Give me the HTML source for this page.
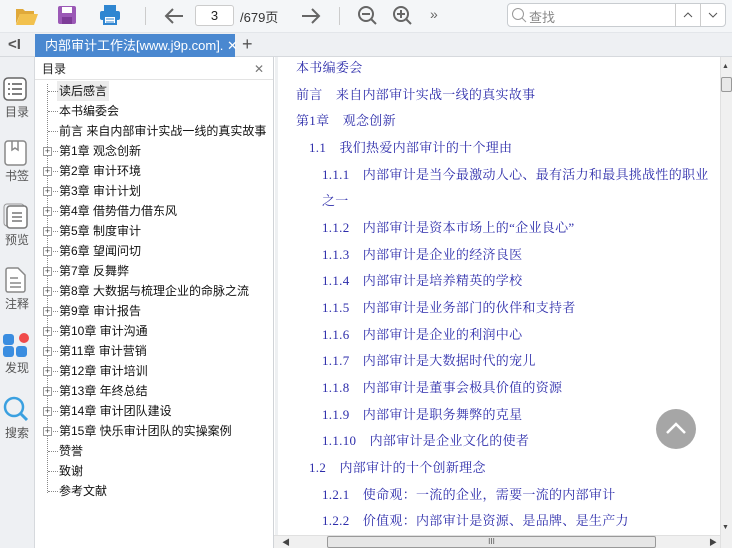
<!DOCTYPE html>
<html><head><meta charset="utf-8"><style>
*{margin:0;padding:0;box-sizing:border-box}
body{width:732px;height:548px;overflow:hidden;background:#fff;font-family:"Liberation Sans","Microsoft YaHei","Noto Sans CJK SC",sans-serif;position:relative}
.abs{position:absolute}
#tb{left:0;top:0;width:732px;height:33px;background:#f4f6f8;border-bottom:1px solid #e3e6ea}
#tabs{left:0;top:33px;width:732px;height:24px;background:#eef0f3;border-bottom:1px solid #d6d9dd}
#tab{left:35px;top:34px;width:200px;height:23px;background:#4a88d0;color:#fff;font-size:13px;line-height:23px;padding-left:10px;white-space:nowrap}
#side{left:0;top:57px;width:35px;height:491px;background:#eef0f3;border-right:1px solid #d6d9dd}
.si{position:absolute;left:0;width:34px;text-align:center;font-size:12px;color:#555}
#toc{left:35px;top:57px;width:239px;height:491px;background:#fff;border-right:1px solid #d0d3d7}
#tochd{left:35px;top:58px;width:238px;height:22px;border-bottom:1px solid #e3e3e3;font-size:12px;line-height:22px;padding-left:7px;color:#222}
.ti{position:absolute;left:59px;font-size:12px;color:#111;white-space:nowrap;line-height:20px;height:20px}
.pl{position:absolute;left:43px;width:9px;height:9px;border:1px solid #999;background:#fff;font-size:9px;line-height:7px;text-align:center;color:#444}
.dt{position:absolute;border-top:1px dotted #888;width:8px;left:50px}
#content{left:275px;top:57px;width:445px;height:478px;background:#fff;border-left:3px solid #eef0f2}
.c{position:absolute;font-family:"Liberation Serif","Noto Serif CJK SC",serif;font-size:13px;letter-spacing:0.3px;color:#2d2dab;white-space:nowrap;line-height:16px;margin-top:1px}
</style></head><body>
<div id="tb" class="abs"></div>
<svg class="abs" style="left:14px;top:5px" width="26" height="22"><path d="M2 4h7l2 2h9v3H6L2 19z" fill="#e0a93a"/><path d="M6 9h18l-4 11H2z" fill="#f2c14e"/></svg>
<svg class="abs" style="left:57px;top:5px" width="20" height="20"><rect x="1" y="1" width="18" height="18" rx="2" fill="#9b59b6"/><rect x="5" y="2" width="10" height="6" fill="#fff"/><rect x="5" y="12" width="10" height="7" fill="#7d3c98"/></svg>
<svg class="abs" style="left:99px;top:4px" width="22" height="22"><rect x="5" y="1" width="12" height="6" fill="#2f86d1"/><rect x="1" y="7" width="20" height="9" rx="2" fill="#2f86d1"/><rect x="5" y="12" width="12" height="8" fill="#fff" stroke="#2f86d1" stroke-width="2"/><line x1="7" y1="15" x2="15" y2="15" stroke="#2f86d1"/><line x1="7" y1="18" x2="15" y2="18" stroke="#2f86d1"/></svg>
<div class="abs" style="left:145px;top:7px;width:1px;height:18px;background:#ccc"></div>
<svg class="abs" style="left:163px;top:6px" width="22" height="20"><path d="M20 10H3M10 3L3 10l7 7" stroke="#666" stroke-width="2" fill="none"/></svg>
<div class="abs" style="left:195px;top:5px;width:39px;height:21px;border:1px solid #ccc;border-radius:3px;background:#fff;text-align:center;font-size:13px;line-height:19px;color:#222">3</div>
<div class="abs" style="left:240px;top:7px;font-size:13px;color:#333">/679页</div>
<svg class="abs" style="left:300px;top:6px" width="22" height="20"><path d="M2 10h17M12 3l7 7-7 7" stroke="#666" stroke-width="2" fill="none"/></svg>
<div class="abs" style="left:339px;top:7px;width:1px;height:18px;background:#ccc"></div>
<svg class="abs" style="left:357px;top:5px" width="22" height="22"><circle cx="9" cy="9" r="7" stroke="#666" stroke-width="2" fill="none"/><path d="M5 9h8M14 14l5 5" stroke="#666" stroke-width="2"/></svg>
<svg class="abs" style="left:392px;top:5px" width="22" height="22"><circle cx="9" cy="9" r="7" stroke="#666" stroke-width="2" fill="none"/><path d="M5 9h8M9 5v8M14 14l5 5" stroke="#666" stroke-width="2"/></svg>
<div class="abs" style="left:430px;top:6px;font-size:14px;color:#666">»</div>
<div class="abs" style="left:507px;top:3px;width:219px;height:24px;border:1px solid #c8ccd0;border-radius:4px;background:#fff"></div>
<svg class="abs" style="left:511px;top:7px" width="16" height="16"><circle cx="7" cy="7" r="5.5" stroke="#999" fill="none"/><path d="M11 11l4 4" stroke="#999"/></svg>
<div class="abs" style="left:529px;top:7px;font-size:13px;color:#888">查找</div>
<div class="abs" style="left:675px;top:4px;width:1px;height:22px;background:#ccc"></div>
<div class="abs" style="left:700px;top:4px;width:1px;height:22px;background:#ccc"></div>
<svg class="abs" style="left:683px;top:11px" width="10" height="8"><path d="M1 6l4-4 4 4" stroke="#555" fill="none"/></svg>
<svg class="abs" style="left:708px;top:11px" width="10" height="8"><path d="M1 2l4 4 4-4" stroke="#555" fill="none"/></svg>

<div id="tabs" class="abs"></div>
<div class="abs" style="left:8px;top:36px;font-size:15px;color:#555;font-weight:bold">&lt;I</div>
<div id="tab" class="abs">内部审计工作法[www.j9p.com]. ✕</div>
<div class="abs" style="left:242px;top:34px;font-size:18px;color:#555">+</div>

<div id="side" class="abs"></div>
<svg class="abs" style="left:3px;top:77px" width="24" height="24"><rect x="1" y="1" width="22" height="22" rx="4" stroke="#666" stroke-width="1.5" fill="#fff"/><path d="M5 7h2M9 7h10M5 12h2M9 12h10M5 17h2M9 17h10" stroke="#555" stroke-width="1.6"/></svg>
<div class="si" style="top:103px">目录</div>
<svg class="abs" style="left:4px;top:140px" width="24" height="26"><rect x="1" y="1" width="21" height="24" rx="3" stroke="#888" stroke-width="1.5" fill="#fff"/><path d="M8 1v9l3-2 3 2V1" stroke="#888" stroke-width="1.5" fill="none"/></svg>
<div class="si" style="top:167px">书签</div>
<svg class="abs" style="left:3px;top:203px" width="26" height="26"><rect x="1" y="1" width="20" height="22" rx="3" stroke="#999" fill="none"/><rect x="4" y="3" width="20" height="22" rx="3" stroke="#777" stroke-width="1.5" fill="#fff"/><path d="M9 10h10M9 14h10M9 18h10" stroke="#777" stroke-width="1.5"/></svg>
<div class="si" style="top:231px">预览</div>
<svg class="abs" style="left:4px;top:267px" width="24" height="26"><path d="M2 3a2 2 0 012-2h10l7 7v15a2 2 0 01-2 2H4a2 2 0 01-2-2z" stroke="#888" stroke-width="1.5" fill="#fff"/><path d="M6 11h8M6 16h11M6 20h11" stroke="#888" stroke-width="1.5"/></svg>
<div class="si" style="top:295px">注释</div>
<svg class="abs" style="left:3px;top:332px" width="26" height="26"><rect x="0" y="2" width="11" height="11" rx="3" fill="#3a8de0"/><circle cx="21" cy="6" r="5" fill="#f04a4a"/><rect x="0" y="14" width="11" height="11" rx="3" fill="#3a8de0"/><rect x="13" y="14" width="11" height="11" rx="3" fill="#3a8de0"/></svg>
<div class="si" style="top:359px">发现</div>
<svg class="abs" style="left:3px;top:396px" width="26" height="26"><circle cx="11" cy="11" r="9" stroke="#3aa0e0" stroke-width="2.5" fill="none"/><path d="M18 18l6 6" stroke="#3aa0e0" stroke-width="3"/></svg>
<div class="si" style="top:424px">搜索</div>

<div id="toc" class="abs"></div>
<div id="tochd" class="abs">目录<span style="position:absolute;right:9px;color:#777">✕</span></div>
<div class="abs" style="left:47px;top:84px;height:409px;border-left:1px dotted #888"></div>
<div class="abs" style="left:57px;top:81px;width:52px;height:20px;background:#ececec"></div>
<div id="items"></div>
<script>
var t=["读后感言","本书编委会","前言 来自内部审计实战一线的真实故事","第1章 观念创新","第2章 审计环境","第3章 审计计划","第4章 借势借力借东风","第5章 制度审计","第6章 望闻问切","第7章 反舞弊","第8章 大数据与梳理企业的命脉之流","第9章 审计报告","第10章 审计沟通","第11章 审计营销","第12章 审计培训","第13章 年终总结","第14章 审计团队建设","第15章 快乐审计团队的实操案例","赞誉","致谢","参考文献"];
var h="";
for(var i=0;i<t.length;i++){var y=81+i*20;h+='<div class="ti" style="top:'+y+'px">'+t[i]+'</div>';
if(i>=3&&i<=17){h+='<div class="pl" style="top:'+(y+6)+'px">+</div><div class="dt" style="top:'+(y+10)+'px;left:53px;width:5px"></div>';}else{h+='<div class="dt" style="top:'+(y+10)+'px;left:48px;width:10px"></div>';}}
document.getElementById("items").innerHTML=h;
</script>

<div id="content" class="abs"></div>
<div class="c" style="left:296px;top:59px">本书编委会</div>
<div class="c" style="left:296px;top:86px">前言　来自内部审计实战一线的真实故事</div>
<div class="c" style="left:296px;top:112px">第1章　观念创新</div>
<div class="c" style="left:309px;top:139px">1.1　我们热爱内部审计的十个理由</div>
<div class="c" style="left:322px;top:166px">1.1.1　内部审计是当今最激动人心、最有活力和最具挑战性的职业</div>
<div class="c" style="left:322px;top:192px">之一</div>
<div class="c" style="left:322px;top:219px">1.1.2　内部审计是资本市场上的“企业良心”</div>
<div class="c" style="left:322px;top:246px">1.1.3　内部审计是企业的经济良医</div>
<div class="c" style="left:322px;top:272px">1.1.4　内部审计是培养精英的学校</div>
<div class="c" style="left:322px;top:299px">1.1.5　内部审计是业务部门的伙伴和支持者</div>
<div class="c" style="left:322px;top:326px">1.1.6　内部审计是企业的利润中心</div>
<div class="c" style="left:322px;top:352px">1.1.7　内部审计是大数据时代的宠儿</div>
<div class="c" style="left:322px;top:379px">1.1.8　内部审计是董事会极具价值的资源</div>
<div class="c" style="left:322px;top:406px">1.1.9　内部审计是职务舞弊的克星</div>
<div class="c" style="left:322px;top:432px">1.1.10　内部审计是企业文化的使者</div>
<div class="c" style="left:309px;top:459px">1.2　内部审计的十个创新理念</div>
<div class="c" style="left:322px;top:486px">1.2.1　使命观：一流的企业，需要一流的内部审计</div>
<div class="c" style="left:322px;top:512px">1.2.2　价值观：内部审计是资源、是品牌、是生产力</div>

<div class="abs" style="left:656px;top:409px;width:40px;height:40px;border-radius:50%;background:#a6a6a6"></div>
<svg class="abs" style="left:656px;top:409px" width="40" height="40"><path d="M11 24l9-9 9 9" stroke="#fff" stroke-width="2.5" fill="none"/></svg>

<div class="abs" style="left:720px;top:57px;width:12px;height:491px;background:#f0f0f0;border-left:1px solid #e0e0e0"></div>
<div class="abs" style="left:722px;top:63px;font-size:7px;color:#444">▲</div>
<div class="abs" style="left:721px;top:77px;width:11px;height:15px;background:#e8e8e8;border:1px solid #999;border-radius:2px"></div>
<div class="abs" style="left:722px;top:524px;font-size:7px;color:#444">▼</div>
<div class="abs" style="left:274px;top:535px;width:446px;height:13px;background:#f0f0f0;border-top:1px solid #e0e0e0"></div>
<div class="abs" style="left:282px;top:537px;font-size:8px;color:#444">◀</div>
<div class="abs" style="left:327px;top:536px;width:329px;height:12px;background:#e6e6e6;border:1px solid #999;border-radius:2px;font-size:8px;text-align:center;color:#555;line-height:10px">III</div>
<div class="abs" style="left:709px;top:537px;font-size:8px;color:#444">▶</div>
</body></html>
